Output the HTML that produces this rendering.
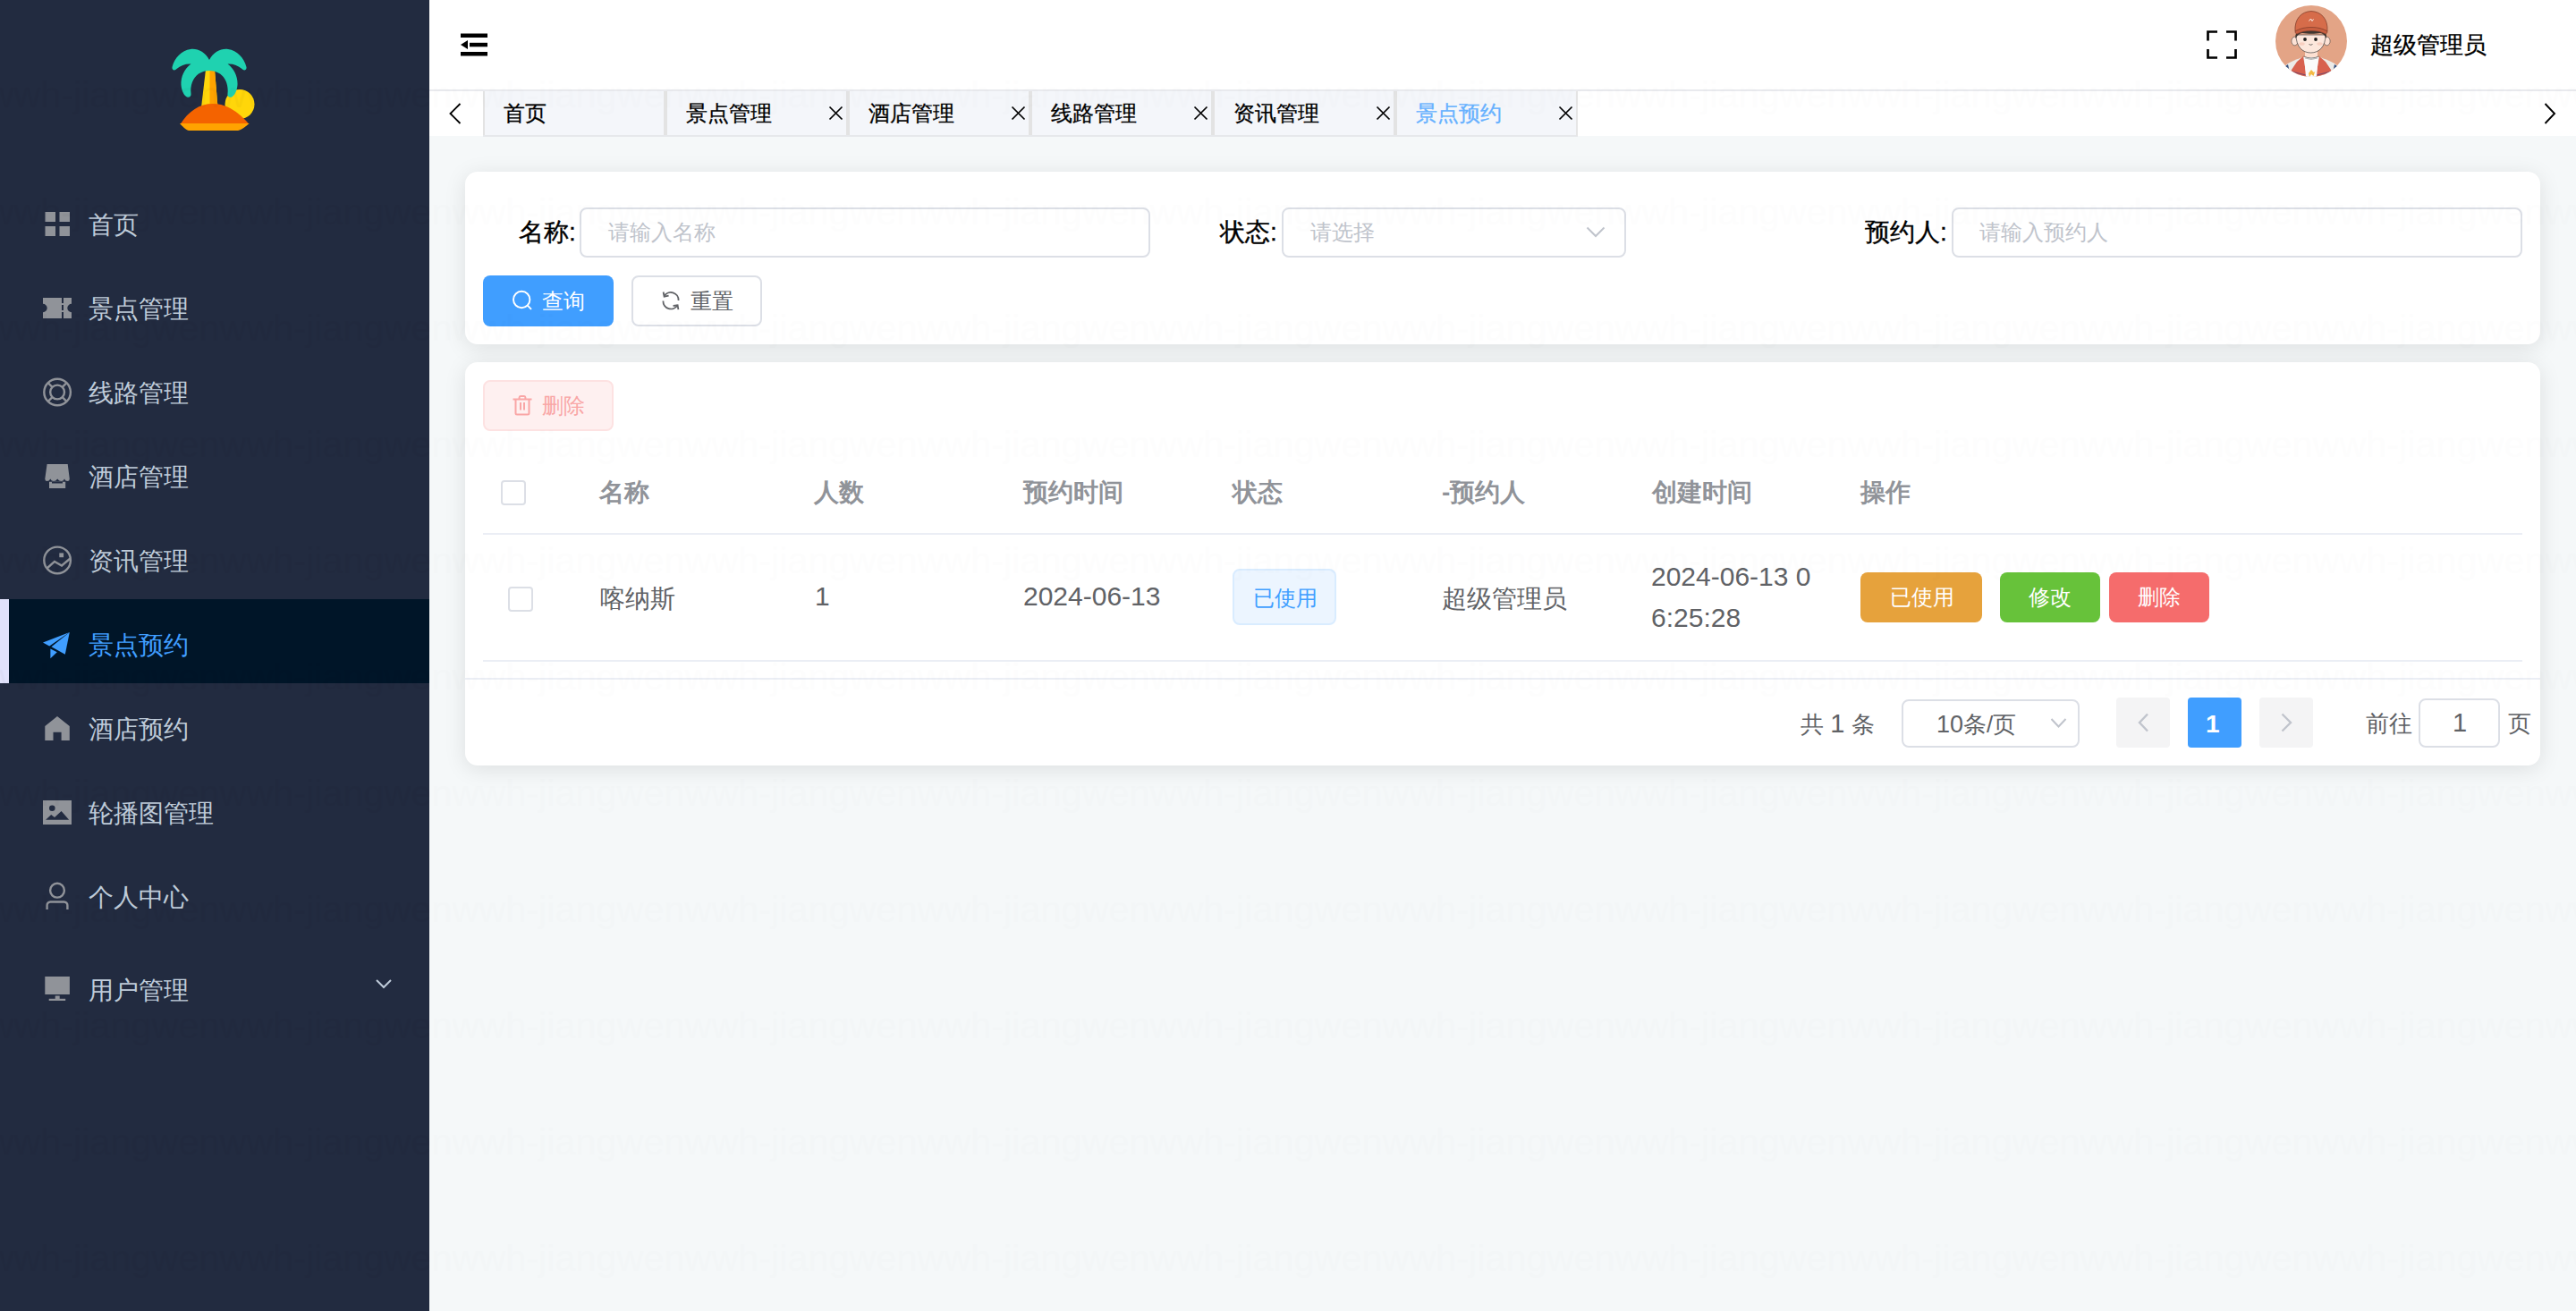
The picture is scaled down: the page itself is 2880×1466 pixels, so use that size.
<!DOCTYPE html>
<html>
<head>
<meta charset="utf-8">
<style>
html,body{margin:0;padding:0;}
body{width:2880px;height:1466px;position:relative;overflow:hidden;background:#f5f8f9;font-family:"Liberation Sans",sans-serif;}
.a{position:absolute;}
.t{position:absolute;white-space:nowrap;line-height:1;}
#side{position:absolute;left:0;top:0;width:480px;height:1466px;background:#222b40;}
.mi{position:absolute;left:99px;font-size:28px;line-height:28px;color:#bfcbd9;white-space:nowrap;}
#hdr{position:absolute;left:480px;top:0;width:2400px;height:100px;background:#fff;}
#hline{position:absolute;left:480px;top:100px;width:2400px;height:2px;background:#e9eaee;}
#tabs{position:absolute;left:480px;top:102px;width:2400px;height:50px;background:#fff;}
.tab{position:absolute;top:102px;height:49px;background:#f4f6fa;}
.sep{position:absolute;top:102px;height:49px;background:#e3e3e3;}
.tt{position:absolute;top:115px;font-size:24px;line-height:24px;color:#000;white-space:nowrap;-webkit-text-stroke:0.3px currentColor;}
.card{position:absolute;background:#fff;border-radius:14px;box-shadow:0 4px 24px rgba(0,0,0,0.1);}
.inp{position:absolute;box-sizing:border-box;border:2px solid #dcdfe6;border-radius:8px;background:#fff;}
.lbl{position:absolute;font-size:28px;line-height:28px;color:#000;white-space:nowrap;-webkit-text-stroke:0.35px #000;}
.ph{position:absolute;font-size:24px;line-height:24px;color:#c0c4cc;white-space:nowrap;}
.th{position:absolute;top:537px;font-size:28px;line-height:28px;color:#909399;font-weight:bold;white-space:nowrap;}
.td{position:absolute;font-size:28px;line-height:28px;color:#606266;white-space:nowrap;}
.num{font-size:30px;}
.btn{position:absolute;box-sizing:border-box;border-radius:8px;}
.bt{position:absolute;font-size:24px;line-height:24px;white-space:nowrap;}
.wm{position:absolute;top:0;height:1466px;pointer-events:none;overflow:hidden;}
.wm .wr{position:absolute;left:-14.5px;font-size:41.4px;line-height:41.4px;white-space:nowrap;color:#000;}
.wm .wr span{display:inline-block;width:260px;}
</style>
</head>
<body>
<!-- SIDEBAR -->
<div id="side"></div>
<!-- logo -->
<svg class="a" style="left:175px;top:40px" width="131" height="131" viewBox="0 0 131 131">
  <circle cx="93" cy="76.5" r="16.5" fill="#ffd60a"/>
  <path d="M55 38 L65 38 L68.5 80 L50 80 Z" fill="#ffd60a"/>
  <path d="M59.5 38 L65 38 L68.5 80 L59.5 80 Z" fill="#ffa300"/>
  <path d="M59 27 C54 18 46 14 38 15 C28 16 20 25 17.5 35 C17 38.5 20.5 39.5 22.5 37 C27 33 33 31 38.5 31.5 C31 37 27 46 27.5 55 C28 62 31 67 34 68.5 C37 69.5 39 67.5 38.5 64.5 C37.5 56 40.5 47 47 42.5 C51 40 55 39 59 39 Z" fill="#1fd2b0"/>
  <path d="M 59 27 C 64 18 72 14 80 15 C 90 16 98 25 100.5 35 C 101 38.5 97.5 39.5 95.5 37 C 91 33 85 31 79.5 31.5 C 87 37 91 46 90.5 55 C 90 62 87 67 84 68.5 C 81 69.5 79 67.5 79.5 64.5 C 80.5 56 77.5 47 71 42.5 C 67 40 63 39 59 39 Z" fill="#1fd2b0"/>
  <path d="M26.5 99 C36 84 48 76 63 76 C78 76 92 85 103.5 99 Z" fill="#f46300"/>
  <path d="M26 98 L103.5 98 C100 101 96 105 91 106 L36 106 C32 105 29 101 26 98 Z" fill="#ffa300"/>
</svg>
<!-- menu icons -->
<svg class="a" style="left:40px;top:220px" width="60" height="920" viewBox="40 220 60 920" fill="#909399">
  <rect x="50.5" y="237" width="11.5" height="11" /><rect x="66.5" y="237" width="11.5" height="11"/>
  <rect x="50.5" y="253" width="11.5" height="11" /><rect x="66.5" y="253" width="11.5" height="11"/>
  <path d="M48 333 H69 V339 H71 V333 H80 V339.8 A4.7 4.7 0 0 0 80 349.2 V356 H71 V349 H69 V356 H48 V349.2 A4.7 4.7 0 0 0 48 339.8 Z M69 341 V347 H71 V341 Z"/>
  <g fill="none" stroke="#909399" stroke-width="2.4">
    <circle cx="64.1" cy="438.5" r="14.8"/>
    <circle cx="64.1" cy="438.5" r="7.9"/>
    <path d="M53.6 428 L58.5 432.9 M74.6 428 L69.7 432.9 M53.6 449 L58.5 444.1 M74.6 449 L69.7 444.1"/>
    <circle cx="64.1" cy="626.4" r="14.8"/>
    <path d="M52.5 635.5 L61 627.9 L69 632.5 L78.5 624.5"/>
    <circle cx="64" cy="995.7" r="7.9"/>
    <path d="M52.6 1017 V1012.5 A3.8 3.8 0 0 1 56.4 1008.5 H71.6 A3.8 3.8 0 0 1 75.4 1012.5 V1017"/>
  </g>
  <path d="M52.6 519 H75.7 L77.8 535.5 Q77.8 538 75.5 538 Q73 538 72 535.5 Q71 538 68.5 538 Q66 538 64.2 535.5 Q62.5 538 60 538 Q57.5 538 56.3 535.5 Q55 538 52.6 538 Q50.3 538 50.3 535.5 Z"/>
  <path d="M55 538.7 H73.2 V546 H55 Z M58 539 V540.5 H70 V539 Z" fill-rule="evenodd"/>
  <rect x="66.3" y="618.4" width="4.8" height="4.8"/>
  <path d="M50.3 812.1 L64 801 L77.8 812.1 V828 H68.6 V818.8 H59.5 V828 H50.3 Z"/>
  <path d="M48 894.9 H80 V921.9 H48 Z M51.1 916.8 L57.2 911.1 L61 914.1 L68.6 906.9 L77.2 916.8 Z M58.3 903.8 m-3.3 0 a3.3 3.3 0 1 0 6.6 0 a3.3 3.3 0 1 0 -6.6 0 Z" fill-rule="evenodd"/>
  <rect x="50.3" y="1092" width="27.6" height="20"/>
  <rect x="61.7" y="1113.5" width="5" height="3.5"/>
  <rect x="54.7" y="1116.8" width="18.5" height="2.2"/>
</svg>
<!-- active item -->
<div class="a" style="left:0;top:670px;width:480px;height:94px;background:#001528;"></div>
<div class="a" style="left:0;top:670px;width:10px;height:94px;background:#e1e2fc;"></div>
<svg class="a" style="left:40px;top:697px" width="50" height="50" viewBox="40 697 50 50" fill="#409eff">
  <path d="M48 718.4 L77.8 706.9 L55.2 722.6 Z"/>
  <path d="M57.5 723.3 L77.8 706.9 L72.8 731.7 Z"/>
  <path d="M56.4 725.6 L63.8 729.2 L56.4 736.3 Z"/>
</svg>
<div class="mi" style="top:238px">首页</div>
<div class="mi" style="top:332px">景点管理</div>
<div class="mi" style="top:426px">线路管理</div>
<div class="mi" style="top:520px">酒店管理</div>
<div class="mi" style="top:614px">资讯管理</div>
<div class="mi" style="top:708px;color:#409eff">景点预约</div>
<div class="mi" style="top:802px">酒店预约</div>
<div class="mi" style="top:896px">轮播图管理</div>
<div class="mi" style="top:990px">个人中心</div>
<div class="mi" style="top:1094px">用户管理</div>
<svg class="a" style="left:418px;top:1092px" width="22" height="18" viewBox="0 0 22 18"><path d="M3 4 L11 12 L19 4" fill="none" stroke="#bfcbd9" stroke-width="2"/></svg>

<!-- HEADER -->
<div id="hdr"></div>
<div id="hline"></div>
<div id="tabs"></div>
<svg class="a" style="left:510px;top:30px" width="40" height="40" viewBox="510 30 40 40" fill="#000">
  <rect x="515" y="37.5" width="30" height="4.5"/><rect x="525" y="47.8" width="20" height="4.5"/><rect x="515" y="58" width="30" height="4.5"/>
  <path d="M515 50 L523 45 L523 55 Z"/>
</svg>
<svg class="a" style="left:2460px;top:28px" width="48" height="44" viewBox="2460 28 48 44" fill="none" stroke="#000" stroke-width="2.7">
  <path d="M2468.5 45.5 V35.5 H2479 M2489 35.5 H2499.5 V45.5 M2499.5 55 V64.5 H2489 M2479 64.5 H2468.5 V55"/>
</svg>
<svg class="a" style="left:2544px;top:6px" width="80" height="80" viewBox="0 0 80 80">
  <defs><clipPath id="cc"><circle cx="40" cy="40" r="40"/></clipPath></defs>
  <g clip-path="url(#cc)">
  <rect width="80" height="80" fill="#e3a486"/>
  <path d="M6 80 L9 69 C14 64 22 61 30 58 L50 58 C58 61 66 64 71 69 L74 80 Z" fill="#ecebe8"/>
  <path d="M4 80 L8 70 L14 66 L17 80 Z M76 80 L72 70 L66 66 L63 80 Z" fill="#34507e"/>
  <path d="M17 80 L18 72 L24 63 L31 57 L35 80 Z M63 80 L62 72 L56 63 L49 57 L45 80 Z" fill="#d8614f"/>
  <path d="M18 74 L34 78 M62 74 L46 78" stroke="#7a4a6a" stroke-width="1.2"/>
  <path d="M32 57 L48 57 L46 80 L34 80 Z" fill="#fbfbfb"/>
  <path d="M33 59 Q40 62 47 59" fill="none" stroke="#9a9a9a" stroke-width="0.7"/>
  <path d="M37 76 L40 72 L43 75 L44.5 73.5 L42.5 79 L40 77 L38 80 Z" fill="#f4ba45"/>
  <rect x="33" y="50" width="14" height="8" fill="#fde0d2"/>
  <path d="M31.5 57 Q40 61 48.5 57" fill="none" stroke="#444" stroke-width="0.7"/>
  <ellipse cx="21.5" cy="40" rx="3.6" ry="4.8" fill="#fde2d5" stroke="#444" stroke-width="0.6"/>
  <ellipse cx="57.5" cy="40" rx="3.6" ry="4.8" fill="#fde2d5" stroke="#444" stroke-width="0.6"/>
  <path d="M23 33 C23 46 30 53 39.5 53 C49 53 56 46 56 33 Z" fill="#fde7dc" stroke="#444" stroke-width="0.7"/>
  <path d="M22.5 37 C22 30 25 27 30 26 L50 26 C55 27 57.5 31 57 37 C55 33 53 31.5 50 31 C45 32 36 32 30 31 C27 31.5 24.5 33 22.5 37 Z" fill="#3e3630"/>
  <path d="M22 29 C21 15 29 7 40 6.5 C51 7 59 15 58 29 C52 26 46 25 40 25 C34 25 28 26 22 29 Z" fill="#d66c4a" stroke="#7a3b2a" stroke-width="0.7"/>
  <path d="M22 29 C28 25.5 34 24.5 40 24.5 C46 24.5 52 25.5 58 29 C58 31 57 32 56 32 C51 29.5 46 28.5 40 28.5 C34 28.5 29 29.5 24 32 C23 32 22 31 22 29 Z" fill="#c85f40" stroke="#7a3b2a" stroke-width="0.6"/>
  <path d="M37.5 17.5 L39.5 15 L41 17.5 L42.5 15.5" fill="none" stroke="#fff" stroke-width="0.9"/>
  <circle cx="33" cy="38" r="1.9" fill="#222"/><circle cx="45" cy="38" r="1.9" fill="#222"/>
  <path d="M37.5 43.5 Q39.5 45 41.5 43.5" fill="none" stroke="#333" stroke-width="0.7"/>
  <ellipse cx="29.5" cy="43" rx="3.2" ry="1.8" fill="#f5bfae" opacity="0.6"/><ellipse cx="49.5" cy="43" rx="3.2" ry="1.8" fill="#f5bfae" opacity="0.6"/>
  </g>
</svg>
<div class="t" style="left:2650px;top:37px;font-size:26px;line-height:26px;color:#000;-webkit-text-stroke:0.3px #000">超级管理员</div>
<!-- tabs -->
<svg class="a" style="left:495px;top:110px" width="30" height="35" viewBox="495 110 30 35"><path d="M514.5 116 L503.5 127 L514.5 138" fill="none" stroke="#000" stroke-width="1.9"/></svg>
<svg class="a" style="left:2835px;top:110px" width="30" height="35" viewBox="2835 110 30 35"><path d="M2845.5 116 L2856 127 L2845.5 138" fill="none" stroke="#000" stroke-width="1.9"/></svg>
<div class="tab" style="left:542px;width:200px"></div>
<div class="tab" style="left:746px;width:200px"></div>
<div class="tab" style="left:950px;width:200px"></div>
<div class="tab" style="left:1154px;width:200px"></div>
<div class="tab" style="left:1358px;width:200px"></div>
<div class="tab" style="left:1562px;width:200px"></div>
<div class="a" style="left:540px;top:151px;width:1224px;height:1.5px;background:#e6e8eb"></div>
<div class="sep" style="left:540px;width:2px"></div>
<div class="sep" style="left:742px;width:4px"></div>
<div class="sep" style="left:946px;width:4px"></div>
<div class="sep" style="left:1150px;width:4px"></div>
<div class="sep" style="left:1354px;width:4px"></div>
<div class="sep" style="left:1558px;width:4px"></div>
<div class="sep" style="left:1762px;width:2px;height:50px;background:#e6e6e6"></div>
<div class="tt" style="left:563px">首页</div>
<div class="tt" style="left:767px">景点管理</div>
<div class="tt" style="left:971px">酒店管理</div>
<div class="tt" style="left:1175px">线路管理</div>
<div class="tt" style="left:1379px">资讯管理</div>
<div class="tt" style="left:1583px;color:#66b1ff">景点预约</div>
<svg class="a" style="left:0;top:0" width="2880" height="160" viewBox="0 0 2880 160" fill="none" stroke="#000" stroke-width="1.7">
  <path d="M927.5 119.5 L941.5 133.5 M941.5 119.5 L927.5 133.5"/>
  <path d="M1131.5 119.5 L1145.5 133.5 M1145.5 119.5 L1131.5 133.5"/>
  <path d="M1335.5 119.5 L1349.5 133.5 M1349.5 119.5 L1335.5 133.5"/>
  <path d="M1539.5 119.5 L1553.5 133.5 M1553.5 119.5 L1539.5 133.5"/>
  <path d="M1743.5 119.5 L1757.5 133.5 M1757.5 119.5 L1743.5 133.5"/>
</svg>

<!-- SEARCH CARD -->
<div class="card" style="left:520px;top:192px;width:2320px;height:193px"></div>
<div class="lbl" style="left:580px;top:246px">名称:</div>
<div class="inp" style="left:648px;top:232px;width:638px;height:56px"></div>
<div class="ph" style="left:680px;top:248px">请输入名称</div>
<div class="lbl" style="left:1364px;top:246px">状态:</div>
<div class="inp" style="left:1433px;top:232px;width:385px;height:56px"></div>
<div class="ph" style="left:1465px;top:248px">请选择</div>
<svg class="a" style="left:1770px;top:248px" width="28" height="22" viewBox="1770 248 28 22"><path d="M1774.5 254.5 L1784 264 L1793.5 254.5" fill="none" stroke="#c0c4cc" stroke-width="2"/></svg>
<div class="lbl" style="left:2085px;top:246px">预约人:</div>
<div class="inp" style="left:2182px;top:232px;width:638px;height:56px"></div>
<div class="ph" style="left:2213px;top:248px">请输入预约人</div>
<div class="btn" style="left:540px;top:308px;width:146px;height:57px;background:#409eff"></div>
<svg class="a" style="left:568px;top:320px" width="32" height="32" viewBox="568 320 32 32" fill="none" stroke="#fff" stroke-width="1.9"><circle cx="583.2" cy="335" r="9.2"/><path d="M589.9 341.7 L594 345.8"/></svg>
<div class="bt" style="left:606px;top:325px;color:#fff">查询</div>
<div class="btn" style="left:706px;top:308px;width:146px;height:57px;background:#fff;border:2px solid #dcdfe6"></div>
<svg class="a" style="left:736px;top:322px" width="30" height="30" viewBox="736 322 30 30" fill="none" stroke="#606266" stroke-width="1.8">
  <path d="M758.6 336 A8.6 8.6 0 0 0 742.6 331.2"/><path d="M741.4 336.5 A8.6 8.6 0 0 0 757.4 341.2"/>
  <path d="M741.6 326.5 L742.6 331.6 L747.6 330.6"/><path d="M752.6 342 L757.6 341.2 L758.4 346.2"/>
</svg>
<div class="bt" style="left:772px;top:325px;color:#606266">重置</div>

<!-- TABLE CARD -->
<div class="card" style="left:520px;top:405px;width:2320px;height:451px"></div>
<div class="btn" style="left:540px;top:425px;width:146px;height:57px;background:#fef0f0;border:2px solid #fde2e2"></div>
<svg class="a" style="left:568px;top:438px" width="32" height="32" viewBox="568 438 32 32" fill="none" stroke="#f9a6a6" stroke-width="2">
  <path d="M573.5 446.5 H594.5 M580.6 446.5 V444.5 Q580.6 443 582 443 H586 Q587.4 443 587.4 444.5 V446.5 M576.5 446.5 V462 Q576.5 463.5 578 463.5 H590 Q591.5 463.5 591.5 462 V446.5 M582 450 V458.5 M586 450 V458.5"/>
</svg>
<div class="bt" style="left:606px;top:442px;color:#f9a6a6">删除</div>
<div class="a" style="left:560px;top:537px;width:24px;height:24px;border:2px solid #dcdfe6;border-radius:4px;background:#fff"></div>
<div class="th" style="left:670px">名称</div>
<div class="th" style="left:910px">人数</div>
<div class="th" style="left:1144px">预约时间</div>
<div class="th" style="left:1378px">状态</div>
<div class="th" style="left:1612px">-预约人</div>
<div class="th" style="left:1847px">创建时间</div>
<div class="th" style="left:2080px">操作</div>
<div class="a" style="left:540px;top:596px;width:2280px;height:2px;background:#ebeef5"></div>
<div class="a" style="left:568px;top:656px;width:24px;height:24px;border:2px solid #dcdfe6;border-radius:4px;background:#fff"></div>
<div class="td" style="left:671px;top:656px">喀纳斯</div>
<div class="td num" style="left:911px;top:652px;line-height:30px">1</div>
<div class="td num" style="left:1144px;top:652px;line-height:30px">2024-06-13</div>
<div class="a" style="left:1378px;top:636px;width:116px;height:63px;box-sizing:border-box;background:#ecf5ff;border:2px solid #d9ecff;border-radius:8px"></div>
<div class="bt" style="left:1401px;top:657px;color:#409eff">已使用</div>
<div class="td" style="left:1612px;top:656px">超级管理员</div>
<div class="td num" style="left:1846px;top:630px;line-height:30px">2024-06-13 0</div>
<div class="td num" style="left:1846px;top:676px;line-height:30px">6:25:28</div>
<div class="btn" style="left:2080px;top:640px;width:136px;height:56px;background:#e6a23c"></div>
<div class="bt" style="left:2113px;top:656px;color:#fff">已使用</div>
<div class="btn" style="left:2236px;top:640px;width:112px;height:56px;background:#67c23a"></div>
<div class="bt" style="left:2268px;top:656px;color:#fff">修改</div>
<div class="btn" style="left:2358px;top:640px;width:112px;height:56px;background:#f56c6c"></div>
<div class="bt" style="left:2390px;top:656px;color:#fff">删除</div>
<div class="a" style="left:540px;top:738px;width:2280px;height:2px;background:#ebeef5"></div>
<div class="a" style="left:520px;top:758px;width:2320px;height:2px;background:#ebeef5"></div>
<!-- pagination -->
<div class="td" style="left:2013px;top:796px;font-size:26px;line-height:26px">共 <span style="font-size:29px">1</span> 条</div>
<div class="inp" style="left:2126px;top:782px;width:199px;height:54px"></div>
<div class="td" style="left:2165px;top:797px;font-size:26px;line-height:26px"><span style="font-size:27px">10</span>条/页</div>
<svg class="a" style="left:2288px;top:798px" width="26" height="20" viewBox="2288 798 26 20"><path d="M2293.5 804 L2301.5 812.5 L2309.5 804" fill="none" stroke="#c0c4cc" stroke-width="2"/></svg>
<div class="btn" style="left:2366px;top:780px;width:60px;height:56px;background:#f4f4f5;border-radius:4px"></div>
<svg class="a" style="left:2380px;top:795px" width="30" height="26" viewBox="2380 795 30 26"><path d="M2401 798.5 L2392 808 L2401 817.5" fill="none" stroke="#c0c4cc" stroke-width="2.4"/></svg>
<div class="btn" style="left:2446px;top:780px;width:60px;height:56px;background:#409eff;border-radius:4px"></div>
<div class="t" style="left:2466px;top:796px;font-size:28px;color:#fff;font-weight:bold">1</div>
<div class="btn" style="left:2526px;top:780px;width:60px;height:56px;background:#f4f4f5;border-radius:4px"></div>
<svg class="a" style="left:2540px;top:795px" width="30" height="26" viewBox="2540 795 30 26"><path d="M2551.5 798.5 L2561 808 L2551.5 817.5" fill="none" stroke="#c0c4cc" stroke-width="2.4"/></svg>
<div class="td" style="left:2645px;top:796px;font-size:26px;line-height:26px">前往</div>
<div class="inp" style="left:2704px;top:781px;width:91px;height:55px"></div>
<div class="td num" style="left:2742px;top:794px;font-size:29px;line-height:29px">1</div>
<div class="td" style="left:2804px;top:796px;font-size:26px;line-height:26px">页</div>
<div class="wm" style="left:0;width:480px;opacity:0.02">
<div class="wr" style="top:-43.7px"><span>wwh-jiangwen</span><span>wwh-jiangwen</span><span>wwh-jiangwen</span><span>wwh-jiangwen</span><span>wwh-jiangwen</span><span>wwh-jiangwen</span><span>wwh-jiangwen</span><span>wwh-jiangwen</span><span>wwh-jiangwen</span><span>wwh-jiangwen</span><span>wwh-jiangwen</span><span>wwh-jiangwen</span></div>
<div class="wr" style="top:86.4px"><span>wwh-jiangwen</span><span>wwh-jiangwen</span><span>wwh-jiangwen</span><span>wwh-jiangwen</span><span>wwh-jiangwen</span><span>wwh-jiangwen</span><span>wwh-jiangwen</span><span>wwh-jiangwen</span><span>wwh-jiangwen</span><span>wwh-jiangwen</span><span>wwh-jiangwen</span><span>wwh-jiangwen</span></div>
<div class="wr" style="top:216.5px"><span>wwh-jiangwen</span><span>wwh-jiangwen</span><span>wwh-jiangwen</span><span>wwh-jiangwen</span><span>wwh-jiangwen</span><span>wwh-jiangwen</span><span>wwh-jiangwen</span><span>wwh-jiangwen</span><span>wwh-jiangwen</span><span>wwh-jiangwen</span><span>wwh-jiangwen</span><span>wwh-jiangwen</span></div>
<div class="wr" style="top:346.5px"><span>wwh-jiangwen</span><span>wwh-jiangwen</span><span>wwh-jiangwen</span><span>wwh-jiangwen</span><span>wwh-jiangwen</span><span>wwh-jiangwen</span><span>wwh-jiangwen</span><span>wwh-jiangwen</span><span>wwh-jiangwen</span><span>wwh-jiangwen</span><span>wwh-jiangwen</span><span>wwh-jiangwen</span></div>
<div class="wr" style="top:476.6px"><span>wwh-jiangwen</span><span>wwh-jiangwen</span><span>wwh-jiangwen</span><span>wwh-jiangwen</span><span>wwh-jiangwen</span><span>wwh-jiangwen</span><span>wwh-jiangwen</span><span>wwh-jiangwen</span><span>wwh-jiangwen</span><span>wwh-jiangwen</span><span>wwh-jiangwen</span><span>wwh-jiangwen</span></div>
<div class="wr" style="top:606.7px"><span>wwh-jiangwen</span><span>wwh-jiangwen</span><span>wwh-jiangwen</span><span>wwh-jiangwen</span><span>wwh-jiangwen</span><span>wwh-jiangwen</span><span>wwh-jiangwen</span><span>wwh-jiangwen</span><span>wwh-jiangwen</span><span>wwh-jiangwen</span><span>wwh-jiangwen</span><span>wwh-jiangwen</span></div>
<div class="wr" style="top:736.7px"><span>wwh-jiangwen</span><span>wwh-jiangwen</span><span>wwh-jiangwen</span><span>wwh-jiangwen</span><span>wwh-jiangwen</span><span>wwh-jiangwen</span><span>wwh-jiangwen</span><span>wwh-jiangwen</span><span>wwh-jiangwen</span><span>wwh-jiangwen</span><span>wwh-jiangwen</span><span>wwh-jiangwen</span></div>
<div class="wr" style="top:866.8px"><span>wwh-jiangwen</span><span>wwh-jiangwen</span><span>wwh-jiangwen</span><span>wwh-jiangwen</span><span>wwh-jiangwen</span><span>wwh-jiangwen</span><span>wwh-jiangwen</span><span>wwh-jiangwen</span><span>wwh-jiangwen</span><span>wwh-jiangwen</span><span>wwh-jiangwen</span><span>wwh-jiangwen</span></div>
<div class="wr" style="top:996.9px"><span>wwh-jiangwen</span><span>wwh-jiangwen</span><span>wwh-jiangwen</span><span>wwh-jiangwen</span><span>wwh-jiangwen</span><span>wwh-jiangwen</span><span>wwh-jiangwen</span><span>wwh-jiangwen</span><span>wwh-jiangwen</span><span>wwh-jiangwen</span><span>wwh-jiangwen</span><span>wwh-jiangwen</span></div>
<div class="wr" style="top:1127.0px"><span>wwh-jiangwen</span><span>wwh-jiangwen</span><span>wwh-jiangwen</span><span>wwh-jiangwen</span><span>wwh-jiangwen</span><span>wwh-jiangwen</span><span>wwh-jiangwen</span><span>wwh-jiangwen</span><span>wwh-jiangwen</span><span>wwh-jiangwen</span><span>wwh-jiangwen</span><span>wwh-jiangwen</span></div>
<div class="wr" style="top:1257.0px"><span>wwh-jiangwen</span><span>wwh-jiangwen</span><span>wwh-jiangwen</span><span>wwh-jiangwen</span><span>wwh-jiangwen</span><span>wwh-jiangwen</span><span>wwh-jiangwen</span><span>wwh-jiangwen</span><span>wwh-jiangwen</span><span>wwh-jiangwen</span><span>wwh-jiangwen</span><span>wwh-jiangwen</span></div>
<div class="wr" style="top:1387.1px"><span>wwh-jiangwen</span><span>wwh-jiangwen</span><span>wwh-jiangwen</span><span>wwh-jiangwen</span><span>wwh-jiangwen</span><span>wwh-jiangwen</span><span>wwh-jiangwen</span><span>wwh-jiangwen</span><span>wwh-jiangwen</span><span>wwh-jiangwen</span><span>wwh-jiangwen</span><span>wwh-jiangwen</span></div>
</div>
<div class="wm" style="left:480px;width:2400px;opacity:0.0045"><div style="position:absolute;left:-480px;top:0">
<div class="wr" style="top:-43.7px"><span>wwh-jiangwen</span><span>wwh-jiangwen</span><span>wwh-jiangwen</span><span>wwh-jiangwen</span><span>wwh-jiangwen</span><span>wwh-jiangwen</span><span>wwh-jiangwen</span><span>wwh-jiangwen</span><span>wwh-jiangwen</span><span>wwh-jiangwen</span><span>wwh-jiangwen</span><span>wwh-jiangwen</span></div>
<div class="wr" style="top:86.4px"><span>wwh-jiangwen</span><span>wwh-jiangwen</span><span>wwh-jiangwen</span><span>wwh-jiangwen</span><span>wwh-jiangwen</span><span>wwh-jiangwen</span><span>wwh-jiangwen</span><span>wwh-jiangwen</span><span>wwh-jiangwen</span><span>wwh-jiangwen</span><span>wwh-jiangwen</span><span>wwh-jiangwen</span></div>
<div class="wr" style="top:216.5px"><span>wwh-jiangwen</span><span>wwh-jiangwen</span><span>wwh-jiangwen</span><span>wwh-jiangwen</span><span>wwh-jiangwen</span><span>wwh-jiangwen</span><span>wwh-jiangwen</span><span>wwh-jiangwen</span><span>wwh-jiangwen</span><span>wwh-jiangwen</span><span>wwh-jiangwen</span><span>wwh-jiangwen</span></div>
<div class="wr" style="top:346.5px"><span>wwh-jiangwen</span><span>wwh-jiangwen</span><span>wwh-jiangwen</span><span>wwh-jiangwen</span><span>wwh-jiangwen</span><span>wwh-jiangwen</span><span>wwh-jiangwen</span><span>wwh-jiangwen</span><span>wwh-jiangwen</span><span>wwh-jiangwen</span><span>wwh-jiangwen</span><span>wwh-jiangwen</span></div>
<div class="wr" style="top:476.6px"><span>wwh-jiangwen</span><span>wwh-jiangwen</span><span>wwh-jiangwen</span><span>wwh-jiangwen</span><span>wwh-jiangwen</span><span>wwh-jiangwen</span><span>wwh-jiangwen</span><span>wwh-jiangwen</span><span>wwh-jiangwen</span><span>wwh-jiangwen</span><span>wwh-jiangwen</span><span>wwh-jiangwen</span></div>
<div class="wr" style="top:606.7px"><span>wwh-jiangwen</span><span>wwh-jiangwen</span><span>wwh-jiangwen</span><span>wwh-jiangwen</span><span>wwh-jiangwen</span><span>wwh-jiangwen</span><span>wwh-jiangwen</span><span>wwh-jiangwen</span><span>wwh-jiangwen</span><span>wwh-jiangwen</span><span>wwh-jiangwen</span><span>wwh-jiangwen</span></div>
<div class="wr" style="top:736.7px"><span>wwh-jiangwen</span><span>wwh-jiangwen</span><span>wwh-jiangwen</span><span>wwh-jiangwen</span><span>wwh-jiangwen</span><span>wwh-jiangwen</span><span>wwh-jiangwen</span><span>wwh-jiangwen</span><span>wwh-jiangwen</span><span>wwh-jiangwen</span><span>wwh-jiangwen</span><span>wwh-jiangwen</span></div>
<div class="wr" style="top:866.8px"><span>wwh-jiangwen</span><span>wwh-jiangwen</span><span>wwh-jiangwen</span><span>wwh-jiangwen</span><span>wwh-jiangwen</span><span>wwh-jiangwen</span><span>wwh-jiangwen</span><span>wwh-jiangwen</span><span>wwh-jiangwen</span><span>wwh-jiangwen</span><span>wwh-jiangwen</span><span>wwh-jiangwen</span></div>
<div class="wr" style="top:996.9px"><span>wwh-jiangwen</span><span>wwh-jiangwen</span><span>wwh-jiangwen</span><span>wwh-jiangwen</span><span>wwh-jiangwen</span><span>wwh-jiangwen</span><span>wwh-jiangwen</span><span>wwh-jiangwen</span><span>wwh-jiangwen</span><span>wwh-jiangwen</span><span>wwh-jiangwen</span><span>wwh-jiangwen</span></div>
<div class="wr" style="top:1127.0px"><span>wwh-jiangwen</span><span>wwh-jiangwen</span><span>wwh-jiangwen</span><span>wwh-jiangwen</span><span>wwh-jiangwen</span><span>wwh-jiangwen</span><span>wwh-jiangwen</span><span>wwh-jiangwen</span><span>wwh-jiangwen</span><span>wwh-jiangwen</span><span>wwh-jiangwen</span><span>wwh-jiangwen</span></div>
<div class="wr" style="top:1257.0px"><span>wwh-jiangwen</span><span>wwh-jiangwen</span><span>wwh-jiangwen</span><span>wwh-jiangwen</span><span>wwh-jiangwen</span><span>wwh-jiangwen</span><span>wwh-jiangwen</span><span>wwh-jiangwen</span><span>wwh-jiangwen</span><span>wwh-jiangwen</span><span>wwh-jiangwen</span><span>wwh-jiangwen</span></div>
<div class="wr" style="top:1387.1px"><span>wwh-jiangwen</span><span>wwh-jiangwen</span><span>wwh-jiangwen</span><span>wwh-jiangwen</span><span>wwh-jiangwen</span><span>wwh-jiangwen</span><span>wwh-jiangwen</span><span>wwh-jiangwen</span><span>wwh-jiangwen</span><span>wwh-jiangwen</span><span>wwh-jiangwen</span><span>wwh-jiangwen</span></div>
</div></div>
</body>
</html>
